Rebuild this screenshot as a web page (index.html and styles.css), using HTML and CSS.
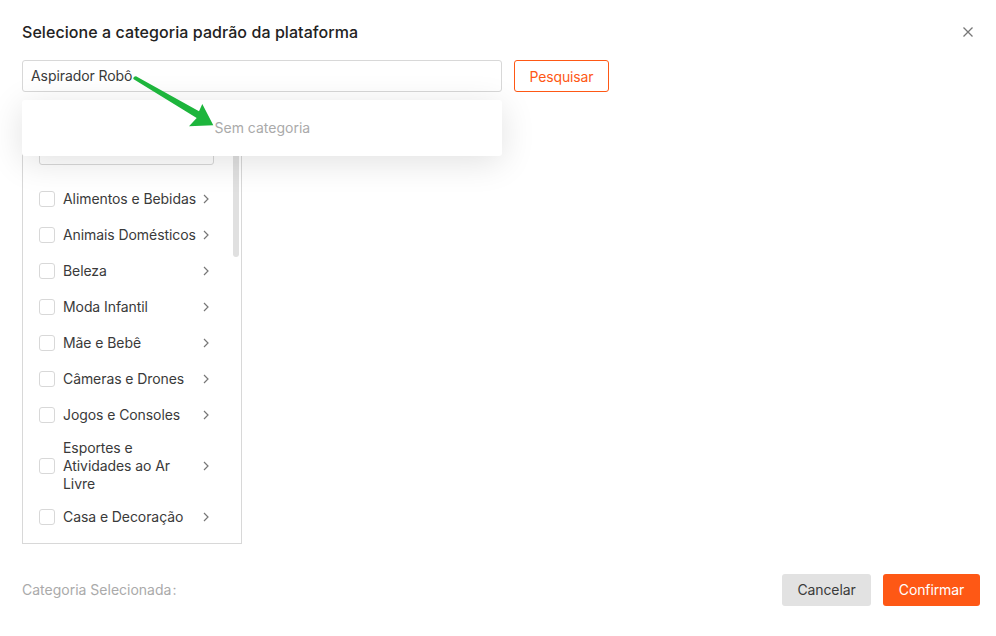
FILE: index.html
```html
<!DOCTYPE html>
<html lang="pt">
<head>
<meta charset="utf-8">
<title>Categoria</title>
<link rel="stylesheet" href="styles.css">
</head>
<body>
<div class="dialog">
  <header class="head">
    <h1 class="title">Selecione a categoria padrão da plataforma</h1>
    <svg class="close" width="12" height="12" viewBox="0 0 12 12"><path d="M1.5 1.5l9 9M10.5 1.5l-9 9" stroke="#777" stroke-width="1.3" fill="none"/></svg>
  </header>
  <div class="search">
    <div class="input">Aspirador Robô</div>
    <button class="btn-outline">Pesquisar</button>
    <div class="popup"><span class="empty">Sem categoria</span></div>
    <svg class="arrow" width="100" height="60" viewBox="0 0 100 60"><path d="M0.3 4Q0.3 1.3 3 1.3L66 36.3L69.3 29L80.3 50.3L56 51.3L63.7 43Z" fill="#1db53c"/></svg>
  </div>
  <div class="content">
    <div class="panel">
      <div class="filter"></div>
      <div class="thumb"></div>
      <ul class="list">
        <li class="row"><span class="check"></span><span class="label">Alimentos e Bebidas</span><svg class="chev" width="6" height="10" viewBox="0 0 6 10"><path d="M1 1l4 4-4 4" stroke="#777" stroke-width="1.2" fill="none"/></svg></li>
        <li class="row"><span class="check"></span><span class="label">Animais Domésticos</span><svg class="chev" width="6" height="10" viewBox="0 0 6 10"><path d="M1 1l4 4-4 4" stroke="#777" stroke-width="1.2" fill="none"/></svg></li>
        <li class="row"><span class="check"></span><span class="label">Beleza</span><svg class="chev" width="6" height="10" viewBox="0 0 6 10"><path d="M1 1l4 4-4 4" stroke="#777" stroke-width="1.2" fill="none"/></svg></li>
        <li class="row"><span class="check"></span><span class="label">Moda Infantil</span><svg class="chev" width="6" height="10" viewBox="0 0 6 10"><path d="M1 1l4 4-4 4" stroke="#777" stroke-width="1.2" fill="none"/></svg></li>
        <li class="row"><span class="check"></span><span class="label">Mãe e Bebê</span><svg class="chev" width="6" height="10" viewBox="0 0 6 10"><path d="M1 1l4 4-4 4" stroke="#777" stroke-width="1.2" fill="none"/></svg></li>
        <li class="row"><span class="check"></span><span class="label">Câmeras e Drones</span><svg class="chev" width="6" height="10" viewBox="0 0 6 10"><path d="M1 1l4 4-4 4" stroke="#777" stroke-width="1.2" fill="none"/></svg></li>
        <li class="row"><span class="check"></span><span class="label">Jogos e Consoles</span><svg class="chev" width="6" height="10" viewBox="0 0 6 10"><path d="M1 1l4 4-4 4" stroke="#777" stroke-width="1.2" fill="none"/></svg></li>
        <li class="row row-tall"><span class="check"></span><span class="label">Esportes e Atividades ao Ar Livre</span><svg class="chev" width="6" height="10" viewBox="0 0 6 10"><path d="M1 1l4 4-4 4" stroke="#777" stroke-width="1.2" fill="none"/></svg></li>
        <li class="row"><span class="check"></span><span class="label">Casa e Decoração</span><svg class="chev" width="6" height="10" viewBox="0 0 6 10"><path d="M1 1l4 4-4 4" stroke="#777" stroke-width="1.2" fill="none"/></svg></li>
      </ul>
    </div>
  </div>
  <footer class="foot">
    <span class="selected">Categoria Selecionada<span class="colon">:</span></span>
    <div class="actions">
      <button class="btn-cancel">Cancelar</button>
      <button class="btn-primary">Confirmar</button>
    </div>
  </footer>
</div>
</body>
</html>
```
FILE: styles.css
```css
* { box-sizing: border-box; }
html, body { margin: 0; padding: 0; background: #fff; }
body { width: 996px; height: 636px; overflow: hidden; font-family: Inter, "Liberation Sans", sans-serif; font-size: 14px; letter-spacing: -0.08px; color: #3a3a3a; }
.dialog { width: 996px; height: 636px; padding: 0 16px 0 22px; display: flex; flex-direction: column; }
.head { height: 60px; display: flex; align-items: center; justify-content: space-between; padding: 4px 0 0; }
.title { margin: 0; font-size: 16px; font-weight: 500; letter-spacing: 0.07px; color: #222; line-height: 24px; }
.close { margin-right: 6px; }
.search { position: relative; display: flex; gap: 12px; height: 32px; }
.input { width: 480px; height: 32px; border: 1px solid #d8d8d8; border-radius: 3px; padding: 0 8px; line-height: 30px; }
.btn-outline { width: 95px; height: 32px; border: 1px solid #fe5815; border-radius: 3px; background: #fff; color: #fe5815; font: inherit; letter-spacing: -0.15px; padding: 0; }
.popup { position: absolute; z-index: 2; left: 0; top: 40px; width: 480px; height: 56px; background: #fff; border-radius: 3px; box-shadow: 0 6px 34px rgba(0,0,0,.12); padding-left: 192.5px; line-height: 56px; }
.empty { color: #aaa; letter-spacing: 0; }
.arrow { position: absolute; z-index: 3; left: 111px; top: 15px; }
.content { height: 452px; padding-top: 16px; }
.panel { position: relative; width: 220px; height: 436px; border: 1px solid #d8d8d8; padding: 0 16px; }
.filter { width: 175px; height: 32px; margin-top: 24px; border: 1px solid #d8d8d8; border-radius: 3px; }
.thumb { position: absolute; right: 2px; top: 0; width: 6px; height: 148px; border-radius: 3px; background: #e0e0e0; }
.list { list-style: none; margin: 16px 0 0; padding: 0; }
.row { display: flex; align-items: center; height: 36px; }
.row-tall { height: 66px; }
.check { flex: none; width: 16px; height: 16px; border: 1px solid #d8d8d8; border-radius: 3px; margin-right: 8px; }
.label { width: 140px; line-height: 18px; }
.chev { flex: none; }
.foot { display: flex; align-items: center; justify-content: space-between; height: 32px; margin-top: 30px; }
.selected { color: #aaa; letter-spacing: 0; position: relative; top: -1px; }
.colon { margin-left: 1px; }
.actions { display: flex; gap: 12px; }
.btn-cancel { width: 89px; height: 32px; border: 0; border-radius: 3px; background: #e2e2e2; color: #3a3a3a; font: inherit; letter-spacing: -0.1px; padding: 0 0 2px; }
.btn-primary { width: 97px; height: 32px; border: 0; border-radius: 3px; background: #fe5815; color: #fff; font: inherit; letter-spacing: -0.1px; padding: 0 0 2px; }
```
